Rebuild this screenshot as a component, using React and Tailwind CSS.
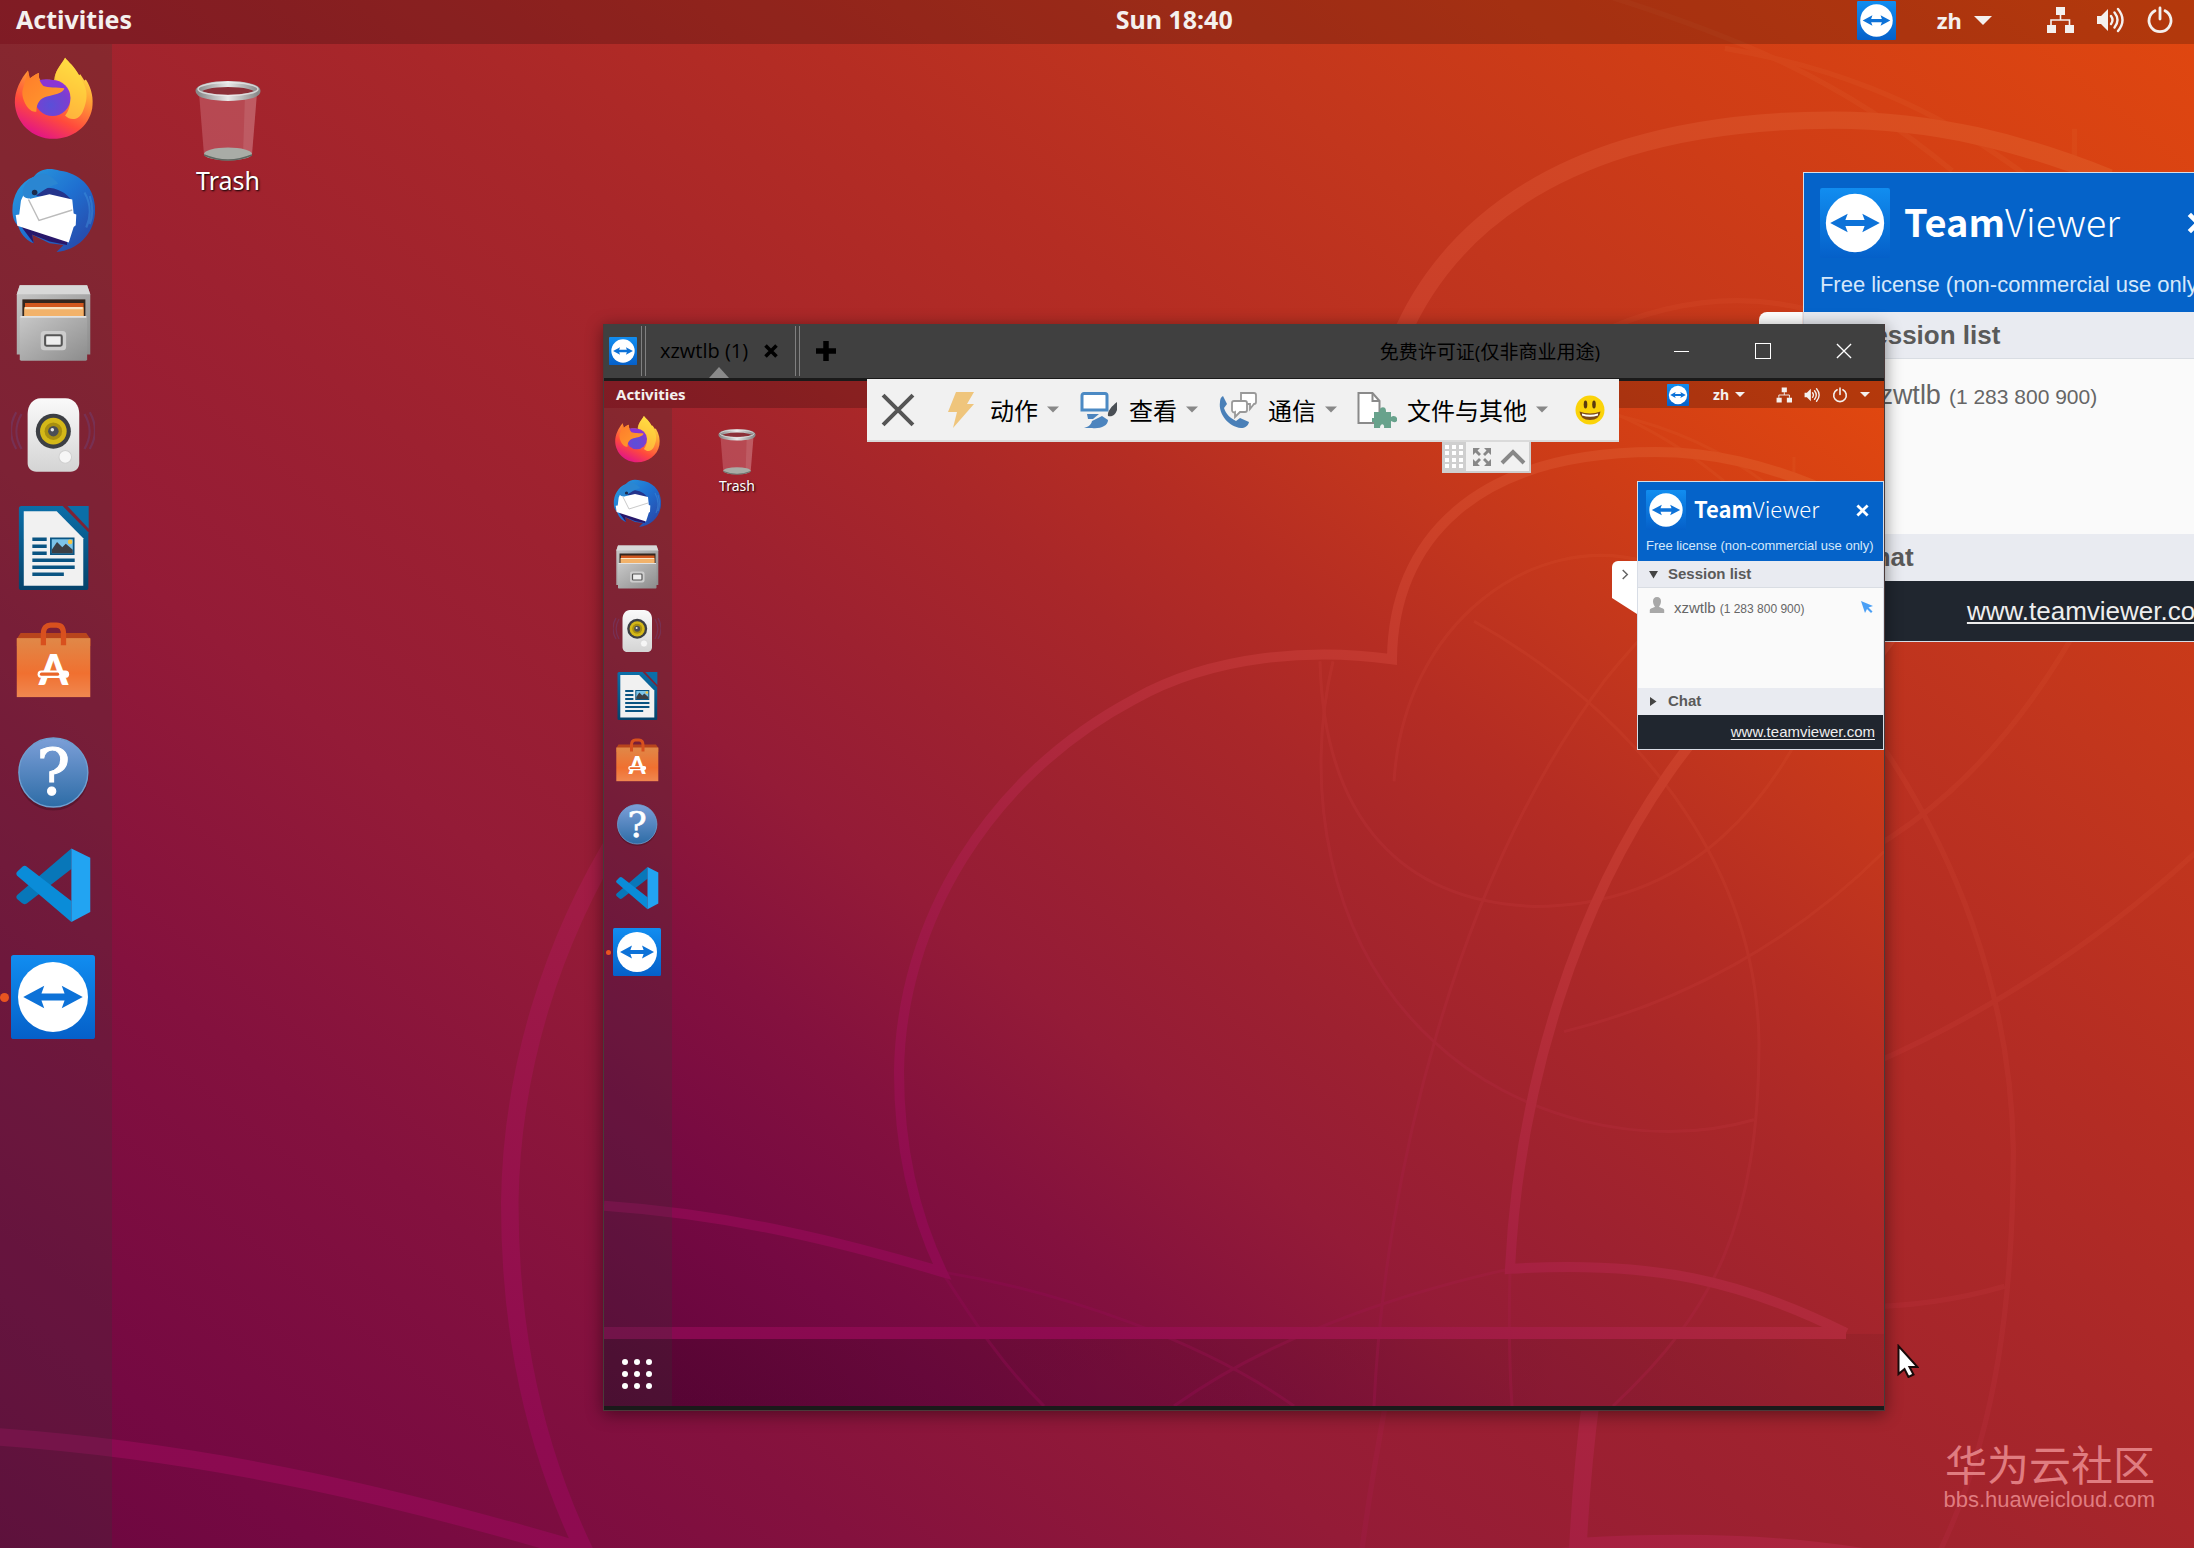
import clsx from "clsx";

// Class sets for the host desktop (full) and for the desktop inside the remote window (view)
const full = {
  wallpaper: "absolute -left-[6px] -top-[4px] w-full aspect-[5/4]",
  bar: "h-11 pb-1 pl-4 pr-6 text-[25px]",
  clockGap: "mr-[624px]",
  tray: "size-[39px]",
  lang: "ml-[41px] gap-3 text-[22px]",
  arrow: "w-[18px] h-[9px]",
  status: "ml-[54px] gap-[22px]",
  statusIcon: "size-[28px]",
  dock: "w-[112px] pl-[11px]",
  dockList: "mt-3 h-[983px]",
  dockIcon: "size-[84px]",
  dot: "size-[9px] -left-[11px]",
  trash: "ml-[66px] mt-[35px] w-[100px]",
  trashIcon: "w-[66px] h-[84px]",
  trashText: "text-[25px] leading-[34px]",
  panel: "w-[435px] top-[172px]",
  head: "h-[139px] pl-4 pr-[28px] pt-[15px]",
  logo: "size-[70px]",
  brand: "ml-[14px] pb-[5px] text-[38px] leading-[65px]",
  close: "size-[22px]",
  license: "mt-[12px] text-[22px] leading-[30px]",
  section: "h-[47px] pl-[18px] text-[26px]",
  sectionArrow: "size-[15px] mr-[19px]",
  list: "h-[175px] pl-[18px] pt-[16px] pr-[14px]",
  person: "size-[28px]",
  user: "ml-[16px] text-[27px]",
  id: "ml-2 text-[21px]",
  pointer: "size-[22px]",
  foot: "h-[60px] pr-5 text-[26px]",
  tab: "w-[44px] h-[93px] -left-[45px] top-[139px] rounded-tl-lg",
};

const view = {
  wallpaper: "absolute inset-0 size-full",
  bar: "h-[27px] pl-3 pr-[14px] text-[15px]",
  clockGap: "mr-[400px]",
  tray: "size-[22px]",
  lang: "ml-6 gap-[6px] text-[14px]",
  arrow: "w-[10px] h-[5px]",
  status: "ml-[31px] gap-3",
  statusIcon: "size-4",
  dock: "w-[68px] pl-[9px]",
  dockList: "mt-[7px] h-[561px]",
  dockIcon: "size-12",
  dot: "size-[5px] -left-[7px]",
  trash: "ml-[35px] mt-[20px] w-[60px]",
  trashIcon: "w-[38px] h-[48px]",
  trashText: "text-[14px] leading-5",
  panel: "w-[247px] top-[100px]",
  head: "h-[79px] pl-2 pr-[14px] pt-2",
  logo: "size-10",
  brand: "ml-2 pb-[3px] text-[22px] leading-[37px]",
  close: "size-[13px]",
  license: "mt-[7px] text-[13px] leading-[18px]",
  section: "h-[27px] pl-[11px] text-[15px]",
  sectionArrow: "size-[9px] mr-[10px]",
  list: "h-[100px] pl-[11px] pt-[9px] pr-[9px]",
  person: "size-4",
  user: "ml-[9px] text-[15px]",
  id: "ml-1 text-[12px]",
  pointer: "size-[14px]",
  foot: "h-[34px] pr-2 text-[15px]",
  tab: "w-[25px] h-[53px] -left-[26px] top-[79px] rounded-tl-md",
};

// Gradients shared by the wallpaper and the icons
const Defs = () => (
  <svg className="absolute size-0" aria-hidden="true">
    <defs>
      <linearGradient id="sky" gradientUnits="userSpaceOnUse" x1="0" y1="1024" x2="999" y2="-225">
        <stop offset="0" stopColor="#62043c" />
        <stop offset=".14" stopColor="#750942" />
        <stop offset=".26" stopColor="#84113e" />
        <stop offset=".37" stopColor="#941b37" />
        <stop offset=".47" stopColor="#9d2130" />
        <stop offset=".58" stopColor="#a92729" />
        <stop offset=".67" stopColor="#b52d23" />
        <stop offset=".76" stopColor="#c2361d" />
        <stop offset=".85" stopColor="#cf3d16" />
        <stop offset="1" stopColor="#e2480f" />
      </linearGradient>
      <linearGradient id="floor" x1="0" y1="0" x2="1" y2="0">
        <stop offset="0" stopColor="#000" stopOpacity=".15" />
        <stop offset="1" stopColor="#000" stopOpacity=".06" />
      </linearGradient>
      <linearGradient id="line" gradientUnits="userSpaceOnUse" x1="0" y1="1024" x2="999" y2="-225">
        <stop offset="0" stopColor="#840850" />
        <stop offset=".22" stopColor="#8f0b50" />
        <stop offset=".5" stopColor="#ae283c" />
        <stop offset=".75" stopColor="#cc4128" />
        <stop offset="1" stopColor="#e4581a" />
      </linearGradient>
      <linearGradient id="tv" x1="0" y1="0" x2="0" y2="1">
        <stop offset="0" stopColor="#118df0" />
        <stop offset="1" stopColor="#0560c9" />
      </linearGradient>
      <linearGradient id="fox" x1=".8" y1="0" x2=".3" y2="1">
        <stop offset="0" stopColor="#fff44f" />
        <stop offset=".35" stopColor="#ffa436" />
        <stop offset=".7" stopColor="#ff4a3c" />
        <stop offset="1" stopColor="#e0118c" />
      </linearGradient>
      <linearGradient id="foxHead" x1="0" y1="0" x2="1" y2="1">
        <stop offset="0" stopColor="#ff7a2a" />
        <stop offset="1" stopColor="#ffa02e" />
      </linearGradient>
      <radialGradient id="globe" cx=".45" cy=".7" r=".8">
        <stop offset="0" stopColor="#5a4fd8" />
        <stop offset=".6" stopColor="#7a3fd0" />
        <stop offset="1" stopColor="#a030d8" />
      </radialGradient>
      <linearGradient id="bird" x1="0" y1="0" x2="1" y2="1">
        <stop offset="0" stopColor="#2aa0e0" />
        <stop offset=".5" stopColor="#1f6fd0" />
        <stop offset="1" stopColor="#2a3fa0" />
      </linearGradient>
      <linearGradient id="steel" x1="0" y1="0" x2="1" y2="1">
        <stop offset="0" stopColor="#c8c8c8" />
        <stop offset="1" stopColor="#8c8c8c" />
      </linearGradient>
      <linearGradient id="shell" x1="0" y1="0" x2="0" y2="1">
        <stop offset="0" stopColor="#fafafa" />
        <stop offset="1" stopColor="#d4d4d4" />
      </linearGradient>
      <linearGradient id="writer" x1="0" y1="0" x2="0" y2="1">
        <stop offset="0" stopColor="#0b6ea8" />
        <stop offset="1" stopColor="#05436b" />
      </linearGradient>
      <linearGradient id="bag" x1="0" y1="0" x2="0" y2="1">
        <stop offset="0" stopColor="#e08848" />
        <stop offset=".6" stopColor="#f07030" />
        <stop offset="1" stopColor="#f08850" />
      </linearGradient>
      <linearGradient id="help" x1="0" y1="0" x2="0" y2="1">
        <stop offset="0" stopColor="#7c9fd8" />
        <stop offset="1" stopColor="#2d6ca6" />
      </linearGradient>
      <linearGradient id="rim" x1="0" y1="0" x2="1" y2="0">
        <stop offset="0" stopColor="#8a8a8a" />
        <stop offset=".5" stopColor="#e8e8e8" />
        <stop offset="1" stopColor="#8a8a8a" />
      </linearGradient>
    </defs>
  </svg>
);

const Wallpaper = ({ className }) => (
  <svg viewBox="0 0 1280 1024" preserveAspectRatio="none" className={className} aria-hidden="true">
    <rect width="1280" height="1024" fill="url(#sky)" />
    <rect y="952" width="1280" height="72" fill="url(#floor)" />
    <g fill="none" stroke="url(#line)" strokeWidth="10">
      <path d="M0 824C130 833 240 861 338 890C302 815 295 745 295 690C297 540 385 395 530 318C610 273 710 267 788 278C789 160 870 71 1052 71C1110 71 1160 84 1210 104" />
      <path strokeWidth="12" d="M0 951H1242" />
      <path d="M1242 951C1140 900 1050 878 906 887C915 700 975 520 1064 393C1120 312 1190 250 1280 190" />
    </g>
    <g fill="none" stroke="url(#line)" strokeWidth="3" opacity=".45">
      <path d="M906 887C905 930 905 980 908 1024" />
      <path d="M906 887C780 915 660 960 570 1024" />
      <path d="M338 890C460 910 600 960 690 1024" />
      <path d="M338 890C370 940 400 985 440 1024" />
      <path d="M729 280C700 400 720 560 830 660C910 735 1040 770 1150 738" />
      <path d="M1009 1024C1110 930 1155 840 1155 660C1152 480 1030 330 870 240" />
      <path d="M770 1024C780 800 850 500 1000 300C1080 200 1160 140 1280 100" />
      <path d="M716 280C720 440 800 520 930 525C1080 525 1180 430 1240 250" />
      <path d="M790 400C800 240 930 150 1040 180" />
      <path d="M890 -10C1000 22 1060 50 1120 100" />
      <path d="M990 30C1110 50 1190 110 1280 220" />
      <path d="M1190 76C1190 130 1186 200 1200 270" />
      <path d="M960 650C1080 620 1190 560 1280 470" />
    </g>
  </svg>
);

const TeamViewerIcon = ({ className }) => (
  <svg viewBox="0 0 48 48" className={className} aria-hidden="true">
    <rect width="48" height="48" rx="1.5" fill="url(#tv)" />
    <circle cx="24" cy="24" r="20" fill="#fff" />
    <path d="M7 24l12-6.4-1.600 4.400h13.200L29 17.600 41 24l-12 6.400 1.600-4.400H17.400L19 30.400z" fill="#0d72d8" />
  </svg>
);

const FirefoxIcon = ({ className }) => (
  <svg viewBox="0 0 48 48" className={className} aria-hidden="true">
    <path d="M30.900 1c2 2.500 5.300 5 8 10l.7-.6 2.300 3.600.9-.6c3.500 5.500 4.400 11 3.600 16.600C44.500 40.500 35 47.300 24.300 47.300 12 47.300 2.500 38 2.200 26.500c-.1-6.500 3.300-13.500 7.500-18.200l1 4.600c1.500-1.300 3.300-2.500 5.300-3.200-.3 1.800 0 3.200 1 4.300 3-.8 6.500-.6 8.500.4C24 9 28.500 5.500 30.900 1z" fill="url(#fox)" />
    <path d="M30.900 1c2 2.500 5.300 5 8 10 4.500 7 6 12 2 21-2.500 5-7 5-10 2 4-5 3.500-11 .5-14.500L24.500 14C25 9 28.500 5 30.900 1z" fill="#ffd83e" opacity=".7" />
    <circle cx="23.700" cy="24" r="10.300" fill="url(#globe)" />
    <path d="M14 15c4-3 13-2.500 18 4.500-4-2.500-8-3-11-1.500z" fill="#8a35d5" />
    <path d="M9.700 8.300l1 4.600c1.500-1.300 3.300-2.500 5.300-3.200-.5 3 .5 5 2.500 7.500 2.500 1 8 .8 12 1.200-.5 3-6.500 3.800-10 4.800-3.500 1-6 3.300-6 8.500C11 33 6 26 6.500 20z" fill="url(#foxHead)" />
  </svg>
);

const ThunderbirdIcon = ({ className }) => (
  <svg viewBox="0 0 48 48" className={className} aria-hidden="true">
    <path d="M4 33c2 6 6 9 9 10l-1-5 10 5 8 1-4 4c12-1 21-10 22-22C49 12 40 3 28 1.500 22 0 17 0 13 5 5 8 .8 16 .8 24c0 4 1 7 3.200 9z" fill="url(#bird)" />
    <path d="M4 31l9 12-1-5 10 4 10 2v-6z" fill="#28176a" />
    <path d="M12 14C18 9 30 11 35 19l-4-1-16-2z" fill="#24348c" />
    <path d="M7.800 14l3.200 3.500 11-2.500 13 3 .8 8 1.500.5-.3 6.200-1.200 1-2.800 8.900L3.600 33l-.9-6.200 2-.3 1-8z" fill="#fff" />
    <path d="M10 18l6 12 19-6" fill="none" stroke="#bbb" strokeWidth=".8" />
    <path d="M13 5c-5 3-7 7-6 11 1 1 3 2 5 1 3-1 7-6 15-8-4-5-9-8-14-4z" fill="#2a86d2" />
    <path d="M42 14c4 7 4 13 1 20M45 16c2 6 2 11 0 16" fill="none" stroke="#4aa4e6" strokeWidth="1.200" opacity=".35" />
    <circle cx="13.500" cy="14" r="1.600" fill="#1c2a4c" />
  </svg>
);

const FilesIcon = ({ className }) => (
  <svg viewBox="0 0 48 48" className={className} aria-hidden="true">
    <path d="M5 2.400h38.500l1.800 5.200V42H3.300V7.600z" fill="url(#steel)" />
    <path d="M5 2.400h38.500l1.800 5.200H3.300z" fill="#d8d8d8" />
    <rect x="6.500" y="10.500" width="36" height="10" fill="#33261e" />
    <path d="M8 12.500h33.500v7.500H8z" fill="#d2581e" />
    <path d="M7.500 15h34v5.500h-34z" fill="#f2b26a" />
    <path d="M8 15.500h33" stroke="#fbe3c0" strokeWidth="1.200" />
    <rect x="5" y="20" width="38.500" height="25.500" rx=".8" fill="url(#steel)" />
    <path d="M5.500 20.500h37.500" stroke="#e2e2e2" />
    <rect x="17" y="28.500" width="14.500" height="11" rx="2" fill="#cdcdcd" />
    <rect x="19.500" y="31" width="9.500" height="6" rx=".8" fill="#eee" stroke="#555" strokeWidth="1.200" />
  </svg>
);

const RhythmboxIcon = ({ className }) => (
  <svg viewBox="0 0 48 48" className={className} aria-hidden="true">
    <path d="M6 12c-4 7-4 13 0 20M3 11c-4 7-4 14 0 21M42 12c4 7 4 13 0 20M45 11c4 7 4 14 0 21" fill="none" stroke="#6a4a8c" strokeWidth="1.300" opacity=".35" />
    <path d="M17 3h14c5 0 8 4 8 9v28c0 3-2 5-5 5H14.500c-3 0-5-2-5-5V12c0-5 3-9 7.500-9z" fill="url(#shell)" />
    <circle cx="24.200" cy="21.800" r="10" fill="#3c3f44" />
    <circle cx="24.200" cy="21.800" r="7.600" fill="#d4b818" />
    <circle cx="24.200" cy="21.800" r="5" fill="#a88f10" />
    <circle cx="24.200" cy="21.800" r="3" fill="#4a4e56" />
    <circle cx="23.600" cy="21" r="1" fill="#e8e8e8" />
    <circle cx="31" cy="36.500" r="3.600" fill="#f6f6f6" stroke="#d0d0d0" strokeWidth=".6" />
  </svg>
);

const WriterIcon = ({ className }) => (
  <svg viewBox="0 0 48 48" className={className} aria-hidden="true">
    <path d="M6 0h23.500L44.200 15v32a1 1 0 0 1-1 1H6a1.500 1.500 0 0 1-1.500-1.500v-45A1.500 1.500 0 0 1 6 0z" fill="url(#writer)" />
    <path d="M32.200 0h12.200v13z" fill="#0b6ea8" />
    <path d="M7.300 3h18.800l15.200 15.400v27.200h-34z" fill="#f1f1f1" />
    <path d="M12.200 19h8.200M12.200 23h8.200M12.200 27h8.200M12.200 31h24.200M12.200 35h24.200M12.200 39h18" stroke="#0a5482" strokeWidth="2" />
    <rect x="22.800" y="18.500" width="13" height="9" fill="#7cc4e8" stroke="#0a5482" strokeWidth="1" />
    <path d="M23.300 27v-2l3-4.500 3 3 2-2 4 3.500v2z" fill="#3c3f44" />
    <circle cx="33.800" cy="20.500" r="1.300" fill="#f4c542" />
  </svg>
);

const SoftwareIcon = ({ className }) => (
  <svg viewBox="0 0 48 48" className={className} aria-hidden="true">
    <path d="M5.500 8.500h37.500l2.400 3.500v4H3.300v-4z" fill="#b8441c" />
    <rect x="3.300" y="11.500" width="42" height="33.700" fill="url(#bag)" />
    <path d="M18.500 15.500V9c0-3.500 2-5 4-5h3.500c2.500 0 4 1.500 4 5v6.500" fill="none" stroke="#d8501e" strokeWidth="3" />
    <text x="24.300" y="38" textAnchor="middle" fontSize="24" fill="#fff" className="font-['Lato',sans-serif] font-black">A</text>
    <rect x="15.200" y="30" width="18" height="4.200" rx="2.100" fill="#fff" />
    <rect x="16.500" y="31.200" width="11" height="1.800" rx=".9" fill="#ea6428" />
  </svg>
);

const HelpIcon = ({ className }) => (
  <svg viewBox="0 0 48 48" className={className} aria-hidden="true">
    <ellipse cx="24.200" cy="26.500" rx="20" ry="19.500" fill="#000" opacity=".2" />
    <circle cx="24.200" cy="24.300" r="19.700" fill="url(#help)" stroke="#6f9fd0" strokeWidth=".8" />
    <text x="24.200" y="37" textAnchor="middle" fontSize="36" fill="#fff" stroke="#fff" strokeWidth=".6" className="font-['DejaVu_Serif',serif]">?</text>
  </svg>
);

const CodeIcon = ({ className }) => (
  <svg viewBox="0 0 48 48" className={className} aria-hidden="true">
    <path d="M34.500 3.100v11.700L9 34.500q-1.500 1-2.800-.2L3.500 32q-1-1.200.2-2.400z" fill="#0877b9" />
    <path d="M3.700 18.800q-1.200-1.200-.2-2.400L6.500 13.500q1.400-1 2.600 0L34.500 33.200v12z" fill="#0a8cd8" />
    <path d="M34.500 3.100l10.800 5.300v31L34.500 45.200z" fill="#22a4f2" />
  </svg>
);

const TrashIcon = ({ className }) => (
  <svg viewBox="0 0 66 84" className={className} aria-hidden="true">
    <path d="M4 14l5 62q24 8 48 0l5-62z" fill="#e8a0a8" opacity=".3" />
    <path d="M50 16l-2 60 9-1 5-61z" fill="#fff" opacity=".1" />
    <ellipse cx="33" cy="75" rx="24" ry="6.500" fill="#a9aca6" />
    <path d="M9 76q24 10 48 0" fill="none" stroke="#5e6660" strokeWidth="1.500" />
    <ellipse cx="33" cy="12" rx="29.500" ry="7" fill="#8c3038" stroke="url(#rim)" strokeWidth="6" />
    <ellipse cx="33" cy="10" rx="30" ry="6.500" fill="none" stroke="#f0f0f0" strokeWidth="1.500" opacity=".7" />
  </svg>
);

const NetworkIcon = ({ className }) => (
  <svg viewBox="0 0 28 28" className={className} aria-hidden="true" fill="#f4f0ee">
    <path d="M10 1h9v8h-9zM1 19h9v8H1zM19 19h9v8h-9z" />
    <path d="M14.500 9v5M5 19v-5h18.500v5" fill="none" stroke="#f4f0ee" strokeWidth="1.600" />
  </svg>
);

const VolumeIcon = ({ className }) => (
  <svg viewBox="0 0 28 28" className={className} aria-hidden="true">
    <path d="M1 10h4l7-7v22l-7-7H1z" fill="#f4f0ee" />
    <path d="M15 10q3 4 0 8M18.500 6.500q6 7.500 0 15M22 3q9 11 0 22" fill="none" stroke="#f4f0ee" strokeWidth="2.400" strokeLinecap="round" />
  </svg>
);

const PowerIcon = ({ className }) => (
  <svg viewBox="0 0 28 28" className={className} aria-hidden="true" fill="none" stroke="#f4f0ee" strokeWidth="2.800" strokeLinecap="round">
    <path d="M9 4.800a11 11 0 1 0 10 0M14 2v11" />
  </svg>
);

const DownArrow = ({ className, fill = "#f4f0ee" }) => (
  <svg viewBox="0 0 18 9" className={className} aria-hidden="true">
    <path d="M0 0h18L9 9z" fill={fill} />
  </svg>
);

const Cross = ({ className, width = 3.6 }) => (
  <svg viewBox="0 0 14 14" className={className} aria-hidden="true" fill="none" stroke="currentColor" strokeWidth={width}>
    <path d="M1.500 1.500l11 11M12.500 1.500l-11 11" />
  </svg>
);

const apps = [
  { name: "Firefox", Icon: FirefoxIcon },
  { name: "Thunderbird", Icon: ThunderbirdIcon },
  { name: "Files", Icon: FilesIcon },
  { name: "Rhythmbox", Icon: RhythmboxIcon },
  { name: "LibreOffice Writer", Icon: WriterIcon },
  { name: "Ubuntu Software", Icon: SoftwareIcon },
  { name: "Help", Icon: HelpIcon },
  { name: "Visual Studio Code", Icon: CodeIcon },
  { name: "TeamViewer", Icon: TeamViewerIcon, running: true },
];

const TopBar = ({ s, clock }) => (
  <header className={clsx("flex items-center bg-black/20 font-bold text-[#f4f0ee]", s.bar)}>
    <button type="button">Activities</button>
    <div className="flex-1" />
    {clock && <time className={s.clockGap}>{clock}</time>}
    <TeamViewerIcon className={s.tray} />
    <button type="button" className={clsx("flex items-center", s.lang)}>
      zh
      <DownArrow className={s.arrow} />
    </button>
    <button type="button" aria-label="System" className={clsx("flex items-center", s.status)}>
      <NetworkIcon className={s.statusIcon} />
      <VolumeIcon className={s.statusIcon} />
      <PowerIcon className={s.statusIcon} />
      <DownArrow className={s.arrow} />
    </button>
  </header>
);

const Dock = ({ s, launcher }) => (
  <nav className={clsx("flex shrink-0 flex-col bg-[rgb(44_60_48/0.22)]", s.dock)}>
    <ul className={clsx("flex shrink-0 flex-col justify-between", s.dockList)}>
      {apps.map(({ name, Icon, running }) => (
        <li key={name} className="relative flex items-center">
          {running && <span className={clsx("absolute rounded-full bg-[#e95420]", s.dot)} />}
          <button type="button" aria-label={name}>
            <Icon className={s.dockIcon} />
          </button>
        </li>
      ))}
    </ul>
    {launcher && (
      <button type="button" aria-label="Show Applications" className="mt-auto mb-[17px] grid w-12 grid-cols-3 justify-center gap-[6px] px-[9px]">
        {[1, 2, 3, 4, 5, 6, 7, 8, 9].map((n) => (
          <span key={n} className="size-[6px] rounded-full bg-white" />
        ))}
      </button>
    )}
  </nav>
);

const SessionPanel = ({ s }) => (
  <section className={clsx("absolute right-0 border border-[#d8dde6] font-['Liberation_Sans',Arial,sans-serif]", s.panel)}>
    <button
      type="button"
      aria-label="Collapse panel"
      className={clsx("absolute flex items-center justify-center bg-white pb-[6px] text-[#666] [clip-path:polygon(0_0,100%_0,100%_100%,0_70%)]", s.tab)}
    >
      <svg viewBox="0 0 8 12" className="mb-5 h-[11px] w-2" fill="none" stroke="currentColor" strokeWidth="1.600">
        <path d="M1.500 1l5 5-5 5" />
      </svg>
    </button>
    <header className={clsx("bg-[#0563c9] text-white", s.head)}>
      <div className="flex items-center">
        <TeamViewerIcon className={s.logo} />
        <h2 className={clsx("flex-1 font-['Noto_Sans_CJK_SC',sans-serif]", s.brand)}>
          <span className="font-bold">Team</span>
          <span className="font-light">Viewer</span>
        </h2>
        <button type="button" aria-label="Close">
          <Cross className={s.close} width={3} />
        </button>
      </div>
      <p className={clsx("whitespace-nowrap text-[#d5e8fb]", s.license)}>Free license (non-commercial use only)</p>
    </header>
    <button type="button" aria-expanded="true" className={clsx("flex w-full items-center border-b border-[#d9dde3] bg-[#e9ebf1] font-bold text-[#5a5a5a]", s.section)}>
      <svg viewBox="0 0 9 9" className={s.sectionArrow}>
        <path d="M0 1h9L4.500 8.500z" fill="#444" />
      </svg>
      Session list
    </button>
    <div className={clsx("flex items-start bg-[#fafafa] text-[#666]", s.list)}>
      <svg viewBox="0 0 16 16" className={s.person} fill="#a8a8a8">
        <path d="M8 0c2.600 0 4 1.800 4 4.200S10.800 9 10 9.500c0 1 5 1.500 5.200 3.500v3H.8v-3C1 11 6 10.500 6 9.500 5.200 9 4 6.600 4 4.200S5.400 0 8 0z" />
      </svg>
      <span className="flex flex-1 items-baseline">
        <span className={s.user}>xzwtlb</span>
        <span className={s.id}>(1 283 800 900)</span>
      </span>
      <svg viewBox="0 0 14 14" className={clsx("mt-[3px]", s.pointer)} fill="#4a9ff5">
        <path d="M1 1l12 5-4.500 1.500 4 4-1.500 1.500-4-4L5 13z" />
      </svg>
    </div>
    <button type="button" aria-expanded="false" className={clsx("flex w-full items-center bg-[#e9ebf1] font-bold text-[#5a5a5a]", s.section)}>
      <svg viewBox="0 0 9 9" className={s.sectionArrow}>
        <path d="M1 0v9l6.500-4.500z" fill="#444" />
      </svg>
      Chat
    </button>
    <footer className={clsx("flex items-center justify-end bg-[#20262f]", s.foot)}>
      <a href="https://www.teamviewer.com" className="text-[#eee] underline underline-offset-2">
        www.teamviewer.com
      </a>
    </footer>
  </section>
);

const Desktop = ({ s, clock, launcher }) => (
  <div className="relative flex h-full flex-col overflow-hidden font-['Noto_Sans',sans-serif]">
    <Wallpaper className={s.wallpaper} />
    <div className="relative flex flex-1 flex-col">
      <TopBar s={s} clock={clock} />
      <div className="flex flex-1">
        <Dock s={s} launcher={launcher} />
        <button type="button" className={clsx("flex flex-col items-center self-start text-white [text-shadow:1px_1px_2px_#000]", s.trash)}>
          <TrashIcon className={s.trashIcon} />
          <span className={s.trashText}>Trash</span>
        </button>
      </div>
    </div>
    <SessionPanel s={s} />
  </div>
);

const BoltIcon = () => (
  <svg viewBox="0 0 40 40" className="size-10" aria-hidden="true">
    <path d="M16 2h18l-7 12h7L13 38l4-16H8z" fill="#efc57c" />
  </svg>
);

const ScreenIcon = () => (
  <svg viewBox="0 0 40 40" className="size-10" aria-hidden="true">
    <path d="M5 3.500h21a2 2 0 0 1 2 2V20H3V5.500a2 2 0 0 1 2-2z" fill="#fff" stroke="#4c8ac4" strokeWidth="3" />
    <path d="M8 24h12l-6 5H9z" fill="#4c84be" />
    <path d="M13 31l10-5 6 4c0 6-8 9-16 8H5c4-1 7-3 8-7z" fill="#4c84be" />
    <path d="M38 12v8c-2 6-6 7-9 6-1-5 4-10 9-14z" fill="#4a4f55" />
  </svg>
);

const PhoneIcon = () => (
  <svg viewBox="0 0 40 40" className="size-10" aria-hidden="true">
    <path d="M5 6l4 8-3 4c2 6 6 10 12 13l4-3 9 4c-1 4-4 6-8 6C11 37 0 24 2 12c0-3 1-5 3-6z" fill="#4a80b8" />
    <path d="M23 3h13a2 2 0 0 1 2 2v7a2 2 0 0 1-2 2l-4 5v-5h-9z" fill="#fff" stroke="#999" strokeWidth="1.800" />
    <path d="M16 11h11a2 2 0 0 1 2 2v7a2 2 0 0 1-2 2h-5l-5 5v-5a2 2 0 0 1-3-2v-7a2 2 0 0 1 2-2z" fill="#fff" stroke="#999" strokeWidth="1.800" />
  </svg>
);

const FileIcon = () => (
  <svg viewBox="0 0 40 40" className="size-10" aria-hidden="true">
    <path d="M1.500 3h14l7 8v22h-21z" fill="#fff" stroke="#8a8a8a" strokeWidth="2" />
    <path d="M15.500 3v8h7" fill="none" stroke="#8a8a8a" strokeWidth="2" />
    <path d="M17 22h6c-2-5 6-7 6-1v1h5v5c4-3 8 2 6 4-2 2-4 1-6 0v7h-7c1-5-4-5-4 0h-6v-6h-2v-4h2z" fill="#68a28c" />
  </svg>
);

const menus = [
  { label: "动作", Icon: BoltIcon },
  { label: "查看", Icon: ScreenIcon },
  { label: "通信", Icon: PhoneIcon },
  { label: "文件与其他", Icon: FileIcon },
];

const Toolbar = () => (
  <div className="absolute top-[55px] left-[263px] flex flex-col items-end font-['Noto_Sans_CJK_SC',sans-serif]">
    <div className="flex h-[63px] items-center border-b-2 border-[#dadada] bg-[#f1f1f1] px-3 text-black">
      <button type="button" aria-label="关闭" className="mr-[23px] text-[#555]">
        <Cross className="size-[38px]" width={1.5} />
      </button>
      {menus.map(({ label, Icon }) => (
        <button key={label} type="button" className="mr-5 flex items-center text-[24px]">
          <Icon />
          <span className="mr-[9px] ml-[10px]">{label}</span>
          <DownArrow className="h-[7px] w-3" fill="#888" />
        </button>
      ))}
      <button type="button" aria-label="反馈" className="mr-[2px] ml-[7px]">
        <svg viewBox="0 0 30 30" className="size-[30px]">
          <circle cx="15" cy="15" r="14.500" fill="#fbd309" />
          <ellipse cx="10.500" cy="9.500" rx="1.800" ry="4" fill="#5a3a10" />
          <ellipse cx="19" cy="9.500" rx="1.800" ry="4" fill="#5a3a10" />
          <path d="M4.500 16.500q10.500 4 21 0-1 8.500-10.500 8.500T4.500 16.500z" fill="#7a4a18" />
          <path d="M7 18.500q8 2.500 16 0v2q-8 2.500-16 0z" fill="#fff" />
        </svg>
      </button>
    </div>
    <div className="mr-[88px] flex h-[31px] items-center border-r-2 border-b-2 border-[#cfcfcf] bg-[#f1f1f1]">
      <span className="grid h-full w-6 grid-cols-3 place-items-center bg-[#cfcfcf] p-[2px]">
        {[1, 2, 3, 4, 5, 6, 7, 8, 9, 10, 11, 12].map((n) => (
          <span key={n} className="size-1 bg-white" />
        ))}
      </span>
      <button type="button" aria-label="全屏" className="ml-[6px]">
        <svg viewBox="0 0 20 20" className="size-5" fill="#888">
          <path d="M1 1h7L5.500 3.500 9 7 7 9 3.500 5.500 1 8zM19 1h-7l2.500 2.500L11 7l2 2 3.500-3.500L19 8zM1 19h7l-2.500-2.500L9 13l-2-2-3.500 3.500L1 12zM19 19h-7l2.500-2.500L11 13l2-2 3.500 3.500L19 12z" />
        </svg>
      </button>
      <button type="button" aria-label="收起" className="mr-[3px] ml-2">
        <svg viewBox="0 0 26 18" className="h-[18px] w-[26px]" fill="none" stroke="#888" strokeWidth="4">
          <path d="M2 15L13 4l11 11" />
        </svg>
      </button>
    </div>
  </div>
);

const TitleBar = () => (
  <header className="flex h-[54px] items-center bg-[#404040] pl-[5px] font-['Open_Sans','Noto_Sans_CJK_SC',sans-serif] text-[20px] text-black">
    <TeamViewerIcon className="size-7" />
    <span className="ml-1 h-[50px] w-[5px] border-x border-[#808080]" />
    <div className="relative flex h-full w-[149px] items-center pl-[14px]">
      xzwtlb (1)
      <button type="button" aria-label="关闭选项卡" className="ml-auto mr-[17px]">
        <Cross className="size-[14px]" />
      </button>
      <svg viewBox="0 0 20 11" className="absolute bottom-0 left-[63px] h-[11px] w-5">
        <path d="M0 11L10 0l10 11z" fill="#8a8a8a" />
      </svg>
    </div>
    <span className="h-[50px] w-[5px] border-x border-[#808080]" />
    <button type="button" aria-label="新建选项卡" className="ml-4">
      <svg viewBox="0 0 20 20" className="size-5" fill="none" stroke="#000" strokeWidth="5.500">
        <path d="M10 0v20M0 10h20" />
      </svg>
    </button>
    <p className="mt-[2px] mr-[41px] ml-auto text-[19px]">免费许可证(仅非商业用途)</p>
    <div className="flex text-white">
      <button type="button" aria-label="最小化" className="flex h-[54px] w-[81px] items-center justify-center">
        <span className="h-px w-[15px] bg-white" />
      </button>
      <button type="button" aria-label="最大化" className="flex h-[54px] w-[81px] items-center justify-center">
        <span className="size-4 border border-white" />
      </button>
      <button type="button" aria-label="关闭" className="flex h-[54px] w-[81px] items-center justify-center">
        <Cross className="size-[18px]" width={1} />
      </button>
    </div>
  </header>
);

const RemoteWindow = () => (
  <main className="absolute top-[324px] left-[603px] w-[1282px] border-x border-b border-[#4a3a3a] shadow-[0_3px_16px_rgb(0_0_0/0.45)]">
    <TitleBar />
    <div className="h-[1032px] border-t-3 border-b-4 border-[#1a1a1a]">
      <Desktop s={view} launcher />
    </div>
    <Toolbar />
  </main>
);

const App = () => (
  <div className="relative h-screen overflow-hidden">
    <Defs />
    <div className="h-full w-[102%]">
      <Desktop s={full} clock="Sun 18:40" />
    </div>
    <RemoteWindow />
    <svg viewBox="0 0 22 34" className="absolute top-[1344px] left-[1897px] h-[34px] w-[22px]" aria-hidden="true">
      <path d="M1.500 2v28l6-5 4 8 5-2.500-4-7.500h8z" fill="#fff" stroke="#1a0a0a" strokeWidth="2" />
    </svg>
    <div className="absolute right-[39px] bottom-[34px] flex flex-col items-end text-[#e07c80]">
      <span className="font-['Noto_Sans_CJK_SC',sans-serif] text-[42px] leading-[46px]">华为云社区</span>
      <span className="font-['Liberation_Sans',Arial,sans-serif] text-[22px] leading-7">bbs.huaweicloud.com</span>
    </div>
  </div>
);

export default App;
